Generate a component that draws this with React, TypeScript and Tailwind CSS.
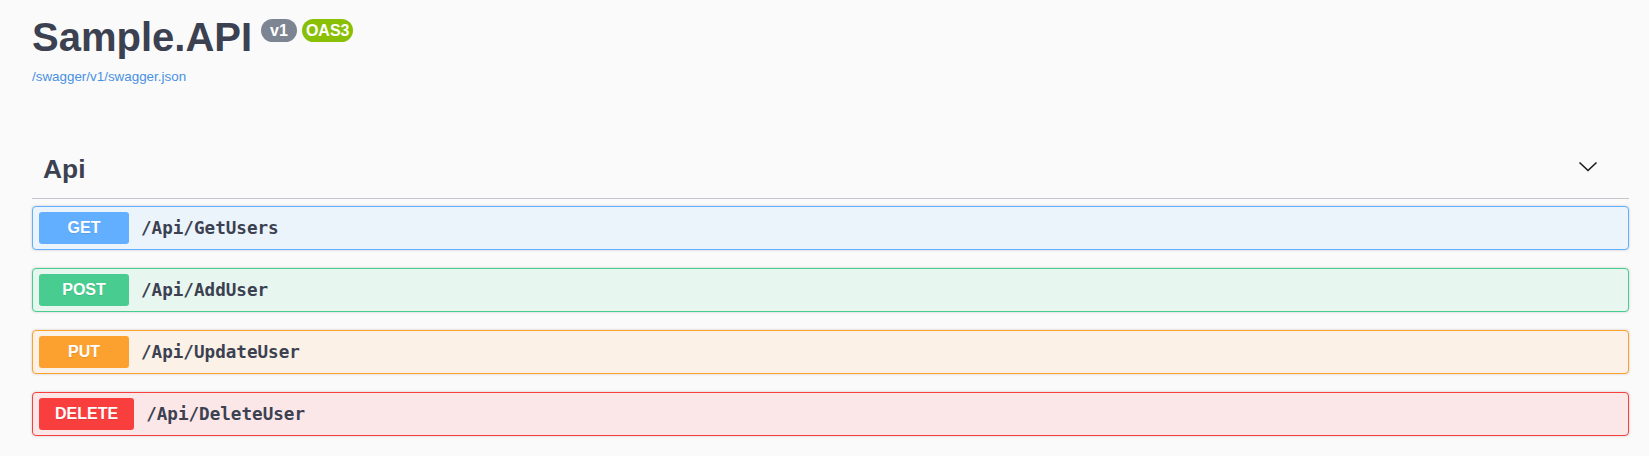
const ops = [
  { method: "GET", path: "/Api/GetUsers", row: "bg-[#ebf3fb] border-[#61affe]", badge: "bg-[#61affe]" },
  { method: "POST", path: "/Api/AddUser", row: "bg-[#e8f6f0] border-[#49cc90]", badge: "bg-[#49cc90]" },
  { method: "PUT", path: "/Api/UpdateUser", row: "bg-[#fbf1e6] border-[#fca130]", badge: "bg-[#fca130]" },
  { method: "DELETE", path: "/Api/DeleteUser", row: "bg-[#fbe7e7] border-[#f93e3e]", badge: "bg-[#f93e3e]" },
]

export default function App() {
  return (
    <div className="min-h-screen bg-[#fafafa] text-[#3b4151] font-['Liberation_Sans',Arial,sans-serif]">
      <div className="pl-[32px] pr-[20px] pt-[13px]">
        {/* info header */}
        <div className="flex items-start">
          <h2 className="text-[40px] leading-[48px] font-bold">Sample.API</h2>
          <div className="flex gap-[5px] ml-[9px] mt-[6px]">
            <span className="h-[23px] flex items-center px-[9px] rounded-full bg-[#7d8492] text-white font-bold text-[16px]">v1</span>
            <span className="h-[23px] flex items-center px-[4px] rounded-full bg-[#89bf04] text-white font-bold text-[16px]">OAS3</span>
          </div>
        </div>
        <a href="#" className="block mt-[8px] text-[13.4px] leading-[16px] text-[#4990e2]">
          /swagger/v1/swagger.json
        </a>

        {/* tag section */}
        <div className="mt-[60.5px]">
          <div className="flex items-center justify-between pl-[11px] pr-[31px] pt-[7px] pb-[13px] border-b border-[#c4c6cb]">
            <h3 className="text-[26.4px] leading-[32px] font-bold">Api</h3>
            <svg width="20" height="20" viewBox="0 0 20 20" className="mb-[4px]">
              <polyline points="1.5,5.5 10,13.5 18.5,5.5" fill="none" stroke="#1a1a1a" strokeWidth="1.6" />
            </svg>
          </div>

          <div className="flex flex-col gap-[17.5px] mt-[7px]">
            {ops.map((op) => (
              <div
                key={op.method}
                className={`flex items-center h-[44.5px] px-[6px] border rounded-[4px] shadow-[0_0_3px_rgba(0,0,0,0.19)] ${op.row}`}
              >
                <span
                  className={`h-[32px] min-w-[90px] px-[16px] flex items-center justify-center rounded-[3px] text-white font-bold text-[16px] [text-shadow:0_1px_0_rgba(0,0,0,0.1)] ${op.badge}`}
                >
                  {op.method}
                </span>
                <span className="ml-[12px] font-['DejaVu_Sans_Mono',monospace] font-bold text-[17.6px] text-[#3b4151]">
                  {op.path}
                </span>
              </div>
            ))}
          </div>
        </div>
      </div>
    </div>
  )
}
